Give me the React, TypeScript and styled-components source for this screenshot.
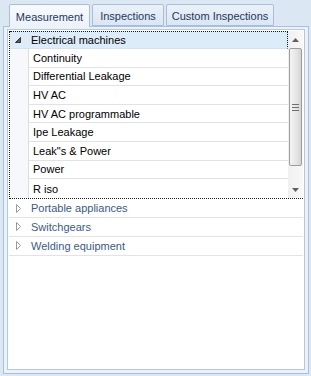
import React from "react";
import styled, { createGlobalStyle } from "styled-components";

const Global = createGlobalStyle`
  html, body { margin: 0; padding: 0; }
  body { font-family: "Liberation Sans", Arial, sans-serif; font-size: 11px; }
`;

const Page = styled.div`
  width: 311px;
  height: 376px;
  box-sizing: border-box;
  background: #dce7f4;
  padding: 4px 2px 2px 3px;
  display: flex;
  flex-direction: column;
`;

const TabStrip = styled.div`
  display: flex;
  gap: 2px;
  padding-left: 6px;
  height: 22px;
  position: relative;
  z-index: 1;
`;

const Tab = styled.div<{ $active?: boolean; $w: number }>`
  box-sizing: border-box;
  width: ${(p) => p.$w}px;
  height: ${(p) => (p.$active ? 23 : 22)}px;
  border: 1px solid #a9bed8;
  border-bottom: ${(p) => (p.$active ? "none" : "1px solid #a9bed8")};
  border-radius: 2px 2px 0 0;
  background: ${(p) =>
    p.$active
      ? "linear-gradient(#f7fafd, #ecf2fa)"
      : "linear-gradient(#eaf1f9, #dbe6f3)"};
  color: #1e395b;
  font-size: 11px;
  display: flex;
  align-items: center;
  justify-content: center;
  padding-top: 1px;
`;

const Panel = styled.div`
  flex: 1;
  border: 1px solid #aac0dc;
  background: #eaf1f9;
  padding: 2px 3px 3px 3px;
  display: flex;
  flex-direction: column;
  width: 306px;
  box-sizing: border-box;
`;

const Inner = styled.div`
  flex: 1;
  background: #ffffff;
  border: 1px solid #b8c8dc;
  padding: 1px;
  display: flex;
  flex-direction: column;
`;

const Group = styled.div`
  display: flex;
  border-left: 1px dotted #1a1a1a;
  border-bottom: 1px dotted #1a1a1a;
`;

const MainCol = styled.div`
  flex: 1;
  display: flex;
  flex-direction: column;
`;

const Header = styled.div`
  height: 16px;
  border-top: 1px dotted #1a1a1a;
  border-right: 1px dotted #1a1a1a;
  border-bottom: 1px solid #d6e3ef;
  background: #dcecf9;
  display: flex;
  align-items: center;
  padding-left: 5px;
  gap: 10px;
  color: #000;
`;

const Children = styled.div`
  display: flex;
`;

const Indent = styled.div`
  width: 18px;
  background: #f6f8fb;
`;

const ChildList = styled.div`
  flex: 1;
  border-left: 1px solid #dedede;
  display: flex;
  flex-direction: column;
`;

const ChildRow = styled.div<{ $last?: boolean }>`
  height: ${(p) => (p.$last ? 19 : 17.6)}px;
  border-bottom: ${(p) => (p.$last ? "none" : "1px solid #e2e2e2")};
  padding-left: 4px;
  display: flex;
  align-items: center;
  color: #000;
`;

const Scrollbar = styled.div`
  width: 15px;
  background: linear-gradient(90deg, #f0f0f0, #f8f8f8);
  display: flex;
  flex-direction: column;
`;

const Arrow = styled.div`
  height: 17px;
  display: flex;
  align-items: center;
  justify-content: center;
`;

const Track = styled.div`
  flex: 1;
  padding: 0 1px;
  display: flex;
  flex-direction: column;
`;

const Thumb = styled.div`
  height: 118px;
  box-sizing: border-box;
  border: 1px solid #9c9c9c;
  border-radius: 2px;
  background: linear-gradient(90deg, #f4f4f4, #e6e6e6 55%, #d4d4d4);
  display: flex;
  align-items: center;
  justify-content: center;
`;

const Collapsed = styled.div`
  height: 17.8px;
  border-bottom: 1px solid #e3e3e3;
  display: flex;
  align-items: center;
  padding-left: 7px;
  gap: 10px;
  color: #3b5a86;
`;

const Expanded = () => (
  <svg width="6" height="6" viewBox="0 0 6 6">
    <path d="M5.5 0.5 L5.5 5.5 L0.5 5.5 Z" fill="#5a5a5a" stroke="#333" strokeWidth="1" strokeLinejoin="round" />
  </svg>
);

const Closed = () => (
  <svg width="5" height="9" viewBox="0 0 5 9">
    <path d="M0.5 0.5 L4.5 4.5 L0.5 8.5 Z" fill="#fff" stroke="#9a9a9a" strokeWidth="1" />
  </svg>
);

const UpArrow = () => (
  <svg width="7" height="4" viewBox="0 0 7 4">
    <path d="M3.5 0 L7 4 L0 4 Z" fill="#606060" />
  </svg>
);

const DownArrow = () => (
  <svg width="7" height="4" viewBox="0 0 7 4">
    <path d="M0 0 L7 0 L3.5 4 Z" fill="#606060" />
  </svg>
);

const Grip = () => (
  <svg width="7" height="7" viewBox="0 0 7 7">
    <path d="M0 0.5 H7 M0 3.5 H7 M0 6.5 H7" stroke="#6f6f6f" strokeWidth="1" />
  </svg>
);

const children = [
  "Continuity",
  "Differential Leakage",
  "HV AC",
  "HV AC programmable",
  "Ipe Leakage",
  "Leak\"s & Power",
  "Power",
  "R iso",
];

const others = ["Portable appliances", "Switchgears", "Welding equipment"];

export default function App() {
  return (
    <>
      <Global />
      <Page>
        <TabStrip>
          <Tab $active $w={81}>Measurement</Tab>
          <Tab $w={72}>Inspections</Tab>
          <Tab $w={108}>Custom Inspections</Tab>
        </TabStrip>
        <Panel>
          <Inner>
            <Group>
              <MainCol>
                <Header>
                  <Expanded />
                  <span>Electrical machines</span>
                </Header>
                <Children>
                  <Indent />
                  <ChildList>
                    {children.map((c, i) => (
                      <ChildRow key={c} $last={i === children.length - 1}>
                        {c}
                      </ChildRow>
                    ))}
                  </ChildList>
                </Children>
              </MainCol>
              <Scrollbar>
                <Arrow>
                  <UpArrow />
                </Arrow>
                <Track>
                  <Thumb>
                    <Grip />
                  </Thumb>
                </Track>
                <Arrow>
                  <DownArrow />
                </Arrow>
              </Scrollbar>
            </Group>
            {others.map((o) => (
              <Collapsed key={o}>
                <Closed />
                <span>{o}</span>
              </Collapsed>
            ))}
          </Inner>
        </Panel>
      </Page>
    </>
  );
}
